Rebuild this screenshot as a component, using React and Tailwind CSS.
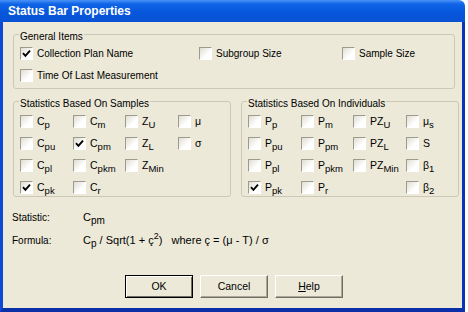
import React from "react";

const samples = [
  [["C", "p"], ["C", "m"], ["Z", "U"], ["μ"]],
  [["C", "pu"], ["C", "pm", true], ["Z", "L"], ["σ"]],
  [["C", "pl"], ["C", "pkm"], ["Z", "Min"], null],
  [["C", "pk", true], ["C", "r"], null, null],
];

const individuals = [
  [["P", "p"], ["P", "m"], ["PZ", "U"], ["μ", "s"]],
  [["P", "pu"], ["P", "pm"], ["PZ", "L"], ["S"]],
  [["P", "pl"], ["P", "pkm"], ["PZ", "Min"], ["β", "1"]],
  [["P", "pk", true], ["P", "r"], null, ["β", "2"]],
];

const Check = ({ checked }) => (
  <span className="flex h-[13px] w-[13px] shrink-0 items-center justify-center border border-t-[#9d9b90] border-l-[#9d9b90] border-r-white border-b-white bg-[linear-gradient(135deg,#e0ddd0,#ffffff_65%)]">
    {checked && (
      <svg width="9" height="9" viewBox="0 0 9 9">
        <path d="M1 4.2 L3.4 6.8 L8 1.6" stroke="#000" strokeWidth="1.9" fill="none" />
      </svg>
    )}
  </span>
);

const Item = ({ children, checked }) => (
  <label className="flex h-[13px] items-center gap-[4px] whitespace-nowrap">
    <Check checked={checked} />
    <span>{children}</span>
  </label>
);

const Sym = ({ b, s }) => (
  <span className="text-[10.5px]">
    {b}
    {s && <sub className="bottom-[-3px] text-[9.5px]">{s}</sub>}
  </span>
);

const Group = ({ title, className, children }) => (
  <fieldset className={`rounded-[3px] border border-[#cbc8b8] ${className}`}>
    <legend className="ml-[5px] px-[1px] pt-[5px] leading-[13px]">{title}</legend>
    {children}
  </fieldset>
);

const StatGrid = ({ rows }) => (
  <div className="grid grid-cols-[53px_52px_53px_52px] gap-y-[9px] pt-[5px] pb-[2px] pl-[6px]">
    {rows.flat().map((c, i) =>
      c ? (
        <Item key={i} checked={c[2]}>
          <Sym b={c[0]} s={c[1]} />
        </Item>
      ) : (
        <span key={i} />
      )
    )}
  </div>
);

const Btn = ({ children, primary }) => (
  <button
    className={`h-[23px] w-[68px] bg-[#ece9d8] text-[10.5px] ${
      primary
        ? "border border-black shadow-[inset_1px_1px_0_#fff,inset_-1px_-1px_0_#716f64]"
        : "border border-t-white border-l-white border-r-[#716f64] border-b-[#716f64] shadow-[inset_-1px_-1px_0_#aca899]"
    }`}
  >
    {children}
  </button>
);

export default function App() {
  return (
    <div className="h-[312px] w-[468px] bg-white font-['Liberation_Sans',Arial,sans-serif] text-[10px] text-black">
      <div className="flex h-[312px] w-[465px] flex-col">
        {/* TITLE BAR */}
        <div className="flex h-[22px] items-center rounded-tr-[6px] bg-[linear-gradient(180deg,#4a94f7_0%,#1064e8_18%,#0657dc_55%,#0a52d4_100%)] pl-[8px]">
          <span className="text-[12px] font-bold text-white">Status Bar Properties</span>
        </div>

        {/* BODY */}
        <div className="flex flex-1 flex-col border-b-[4px] border-l-[3px] border-r-[3px] border-b-[#0a2fa8] border-l-[#0c4ad6] border-r-[#0a34b8] bg-[#ece9d8] pt-[3px] pl-[10px]">
          {/* GENERAL */}
          <Group title="General Items" className="w-[442px]">
            <div className="flex flex-col gap-[9px] pt-[4px] pb-[6px] pl-[6px]">
              <div className="flex">
                <div className="w-[179px]">
                  <Item checked>Collection Plan Name</Item>
                </div>
                <div className="w-[143px]">
                  <Item>Subgroup Size</Item>
                </div>
                <Item>Sample Size</Item>
              </div>
              <Item>Time Of Last Measurement</Item>
            </div>
          </Group>

          {/* STATISTICS */}
          <div className="mt-[3px] flex gap-[10px]">
            <Group title="Statistics Based On Samples" className="w-[216px]">
              <StatGrid rows={samples} />
            </Group>
            <Group title="Statistics Based On Individuals" className="w-[216px]">
              <StatGrid rows={individuals} />
            </Group>
          </div>

          {/* STATISTIC / FORMULA */}
          <div className="mt-[13px] flex h-[14px] items-center">
            <span className="w-[71px] -ml-[1px]">Statistic:</span>
            <span className="text-[11px]">
              C<sub className="bottom-[-3px] text-[10px]">pm</sub>
            </span>
          </div>
          <div className="mt-[9px] flex h-[14px] items-center">
            <span className="w-[71px] -ml-[1px]">Formula:</span>
            <span className="whitespace-pre text-[11px]">
              C<sub className="bottom-[-3px] text-[10px]">p</sub> / Sqrt(1 + ç
              <sup className="text-[9px]">2</sup>)   where ç = (μ - T) / σ
            </span>
          </div>

          {/* BUTTONS */}
          <div className="mt-[28px] flex gap-[7px] pl-[112px]">
            <Btn primary>OK</Btn>
            <Btn>Cancel</Btn>
            <Btn>
              <span className="underline">H</span>elp
            </Btn>
          </div>
        </div>
      </div>
    </div>
  );
}
